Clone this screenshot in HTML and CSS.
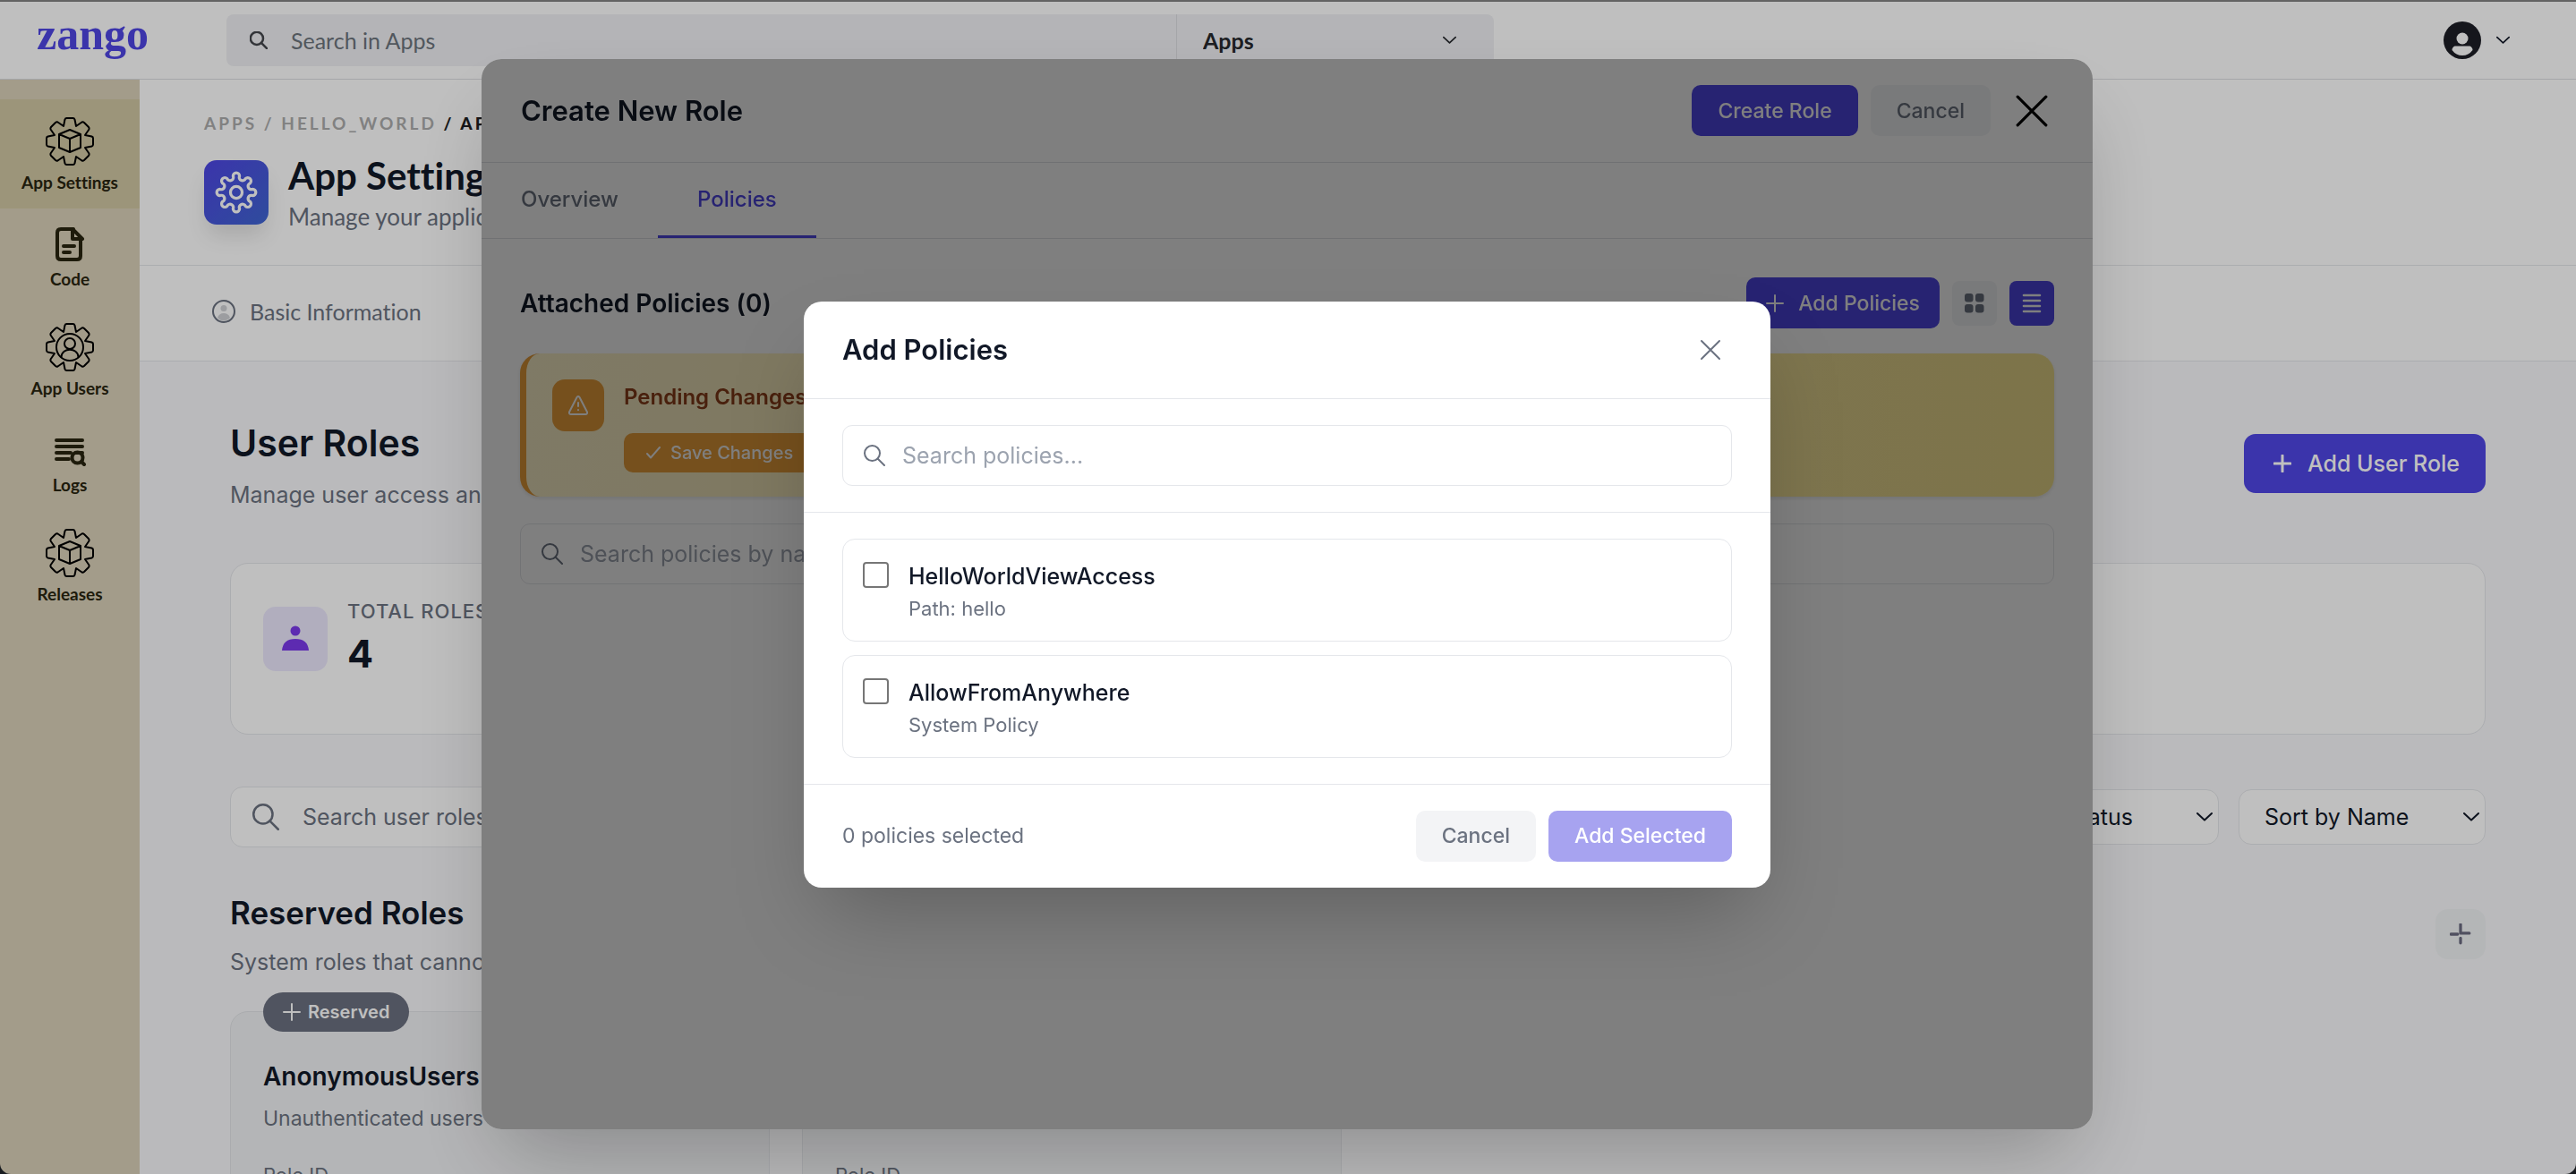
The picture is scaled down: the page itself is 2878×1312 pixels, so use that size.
FILE: index.html
```html
<!DOCTYPE html>
<html lang="en">

<head>
    <meta charset="UTF-8">
    <meta name="viewport" content="width=device-width, initial-scale=1.0">
    <title>Zango - App Settings</title>
    <link rel="stylesheet" href="styles.css">
</head>

<body>
    <!-- shared icon shapes -->
    <svg class="sprite" aria-hidden="true">
        <symbol id="gear" viewBox="-27 -27 54 54">
            <path d="M-7-17L-5.5-24.5Q-5-26-3.500-26H3.500Q5-26 5.500-24.500L7-17L13.500-21.500Q14.800-22 16-21L21-16Q22-14.800 21.500-13.500L17-7L24.500-5.500Q26-5 26-3.500V3.500Q26 5 24.500 5.500L17 7L21.500 13.500Q22 14.800 21 16L16 21Q14.800 22 13.500 21.500L7 17L5.500 24.500Q5 26 3.500 26H-3.500Q-5 26-5.500 24.500L-7 17L-13.500 21.500Q-14.800 22-16 21L-21 16Q-22 14.800-21.500 13.500L-17 7L-24.500 5.500Q-26 5-26 3.500V-3.500Q-26-5-24.500-5.500L-17-7L-21.500-13.500Q-22-14.800-21-16L-16-21Q-14.800-22-13.500-21.500Z" />
        </symbol>
        <symbol id="cube" viewBox="-27 -27 54 54">
            <path d="M0-13L12-8V7L0 12L-12 7V-8ZM-12-8L0-3L12-8M0-3V12" />
        </symbol>
        <symbol id="search" viewBox="0 0 24 24">
            <circle cx="9.500" cy="9.500" r="8.500" />
            <path d="M15.500 15.500L23 23" />
        </symbol>
        <symbol id="chevron" viewBox="0 0 18 10">
            <path d="M1 1L9 8.500L17 1" />
        </symbol>
        <symbol id="plus" viewBox="0 0 20 20">
            <path d="M10 1V19M1 10H19" />
        </symbol>
        <symbol id="cross" viewBox="0 0 24 24">
            <path d="M2 2L22 22M22 2L2 22" />
        </symbol>
    </svg>

    <header class="topbar">
        <a class="logo" href="#">zango</a>
        <div class="app-search">
            <label class="app-search-text">
                <svg class="icon icon-app-search"><use href="#search" /></svg>
                <input type="text" placeholder="Search in Apps" aria-label="Search in Apps">
            </label>
            <div class="select-wrap app-search-type">
                <select aria-label="Search type">
                    <option>Apps</option>
                </select>
                <svg class="icon chevron chevron-small"><use href="#chevron" /></svg>
            </div>
        </div>
        <button class="profile" type="button" aria-label="Profile">
            <svg class="avatar" viewBox="0 0 42 42">
                <circle cx="21" cy="21" r="21" fill="#1d1e26" />
                <circle cx="21" cy="19" r="6.500" fill="#fff" />
                <path d="M12.500 27.500H29.500Q32.500 29 32.500 32Q28 38 21 38T9.500 32Q9.500 29 12.500 27.500Z" fill="#fff" />
            </svg>
            <svg class="icon chevron-small"><use href="#chevron" /></svg>
        </button>
    </header>

    <div class="layout">
        <nav class="sidebar">
            <a class="nav-item active" href="#">
                <svg class="nav-gear"><use href="#gear" /><use href="#cube" /></svg>
                App Settings
            </a>
            <a class="nav-item" href="#">
                <svg class="nav-small" viewBox="0 0 40 40">
                    <path d="M24 3H10Q6 3 6 7V33Q6 37 10 37H28Q32 37 32 33V14" />
                    <path d="M23 3V14H34M23 3L34 14" />
                    <path d="M13 22H25M13 29H20" />
                </svg>
                Code
            </a>
            <a class="nav-item" href="#">
                <svg class="nav-gear" viewBox="-27 -27 54 54">
                    <use href="#gear" x="-27" y="-27" width="54" height="54" />
                    <circle r="15" />
                    <circle cy="-4" r="6" />
                    <path d="M-9.500 11C-9 0 9 0 9.500 11" />
                </svg>
                App Users
            </a>
            <a class="nav-item" href="#">
                <svg class="nav-small" viewBox="0 0 40 40">
                    <path d="M5 9H34M5 16H34M5 23H21M5 30H19" />
                    <circle cx="28.500" cy="28.500" r="6" />
                    <path d="M33 33L36 36M27 23H34" />
                </svg>
                Logs
            </a>
            <a class="nav-item" href="#">
                <svg class="nav-gear"><use href="#gear" /><use href="#cube" /></svg>
                Releases
            </a>
        </nav>

        <main class="page">
            <section class="page-head">
                <div class="breadcrumb">
                    <a href="#">APPS</a> <span>/</span> <a href="#">HELLO_WORLD</a> <b>/ APP SETTINGS</b>
                </div>
                <div class="page-title">
                    <div class="app-icon">
                        <svg viewBox="-22 -22 44 44">
                            <path d="M-3.300-16.700A3.300 3.300 0 0 1 3.300-16.700A3.300 3.300 0 0 0 9.400-14.100A3.300 3.300 0 0 1 14.100-9.400A3.300 3.300 0 0 0 16.700-3.300A3.300 3.300 0 0 1 16.700 3.300A3.300 3.300 0 0 0 14.100 9.400A3.300 3.300 0 0 1 9.400 14.100A3.300 3.300 0 0 0 3.300 16.700A3.300 3.300 0 0 1-3.300 16.700A3.300 3.300 0 0 0-9.400 14.100A3.300 3.300 0 0 1-14.100 9.400A3.300 3.300 0 0 0-16.700 3.300A3.300 3.300 0 0 1-16.700-3.300A3.300 3.300 0 0 0-14.100-9.400A3.300 3.300 0 0 1-9.400-14.100A3.300 3.300 0 0 0-3.300-16.700Z" />
                            <circle r="6" />
                        </svg>
                    </div>
                    <div>
                        <h1>App Settings</h1>
                        <p>Manage your application settings</p>
                    </div>
                </div>
            </section>

            <div class="page-tabs">
                <a href="#">
                    <svg class="tab-icon" viewBox="0 0 26 26">
                        <circle cx="13" cy="13" r="12" fill="none" stroke="#6b7280" stroke-width="2" />
                        <circle cx="13" cy="9.500" r="3.500" fill="#d0d2d6" />
                        <path d="M6 20Q8 15 13 15T20 20Q17 23.500 13 23.500T6 20Z" fill="#d0d2d6" />
                    </svg>
                    Basic Information
                </a>
            </div>

            <div class="content">
                <div class="row-between">
                    <div class="heading">
                        <h2>User Roles</h2>
                        <p>Manage user access and permissions</p>
                    </div>
                    <button class="btn-add-role" type="button">
                        <svg class="icon icon-plus"><use href="#plus" /></svg>
                        Add User Role
                    </button>
                </div>

                <div class="stat-card">
                    <div class="stat-icon">
                        <svg viewBox="0 0 30 30">
                            <circle cx="15" cy="6" r="5.500" fill="#7c3aed" />
                            <path d="M0 28Q1 15 15 15T30 28Z" fill="#7c3aed" />
                        </svg>
                    </div>
                    <div>
                        <div class="stat-label">TOTAL ROLES</div>
                        <div class="stat-value">4</div>
                    </div>
                </div>

                <div class="filters">
                    <label class="role-search">
                        <svg class="icon icon-role-search"><use href="#search" /></svg>
                        <input type="text" placeholder="Search user roles..." aria-label="Search user roles">
                    </label>
                    <div class="select-wrap select-status">
                        <select aria-label="Status">
                            <option>All Status</option>
                        </select>
                        <svg class="icon chevron"><use href="#chevron" /></svg>
                    </div>
                    <div class="select-wrap select-sort">
                        <select aria-label="Sort">
                            <option>Sort by Name</option>
                        </select>
                        <svg class="icon chevron"><use href="#chevron" /></svg>
                    </div>
                </div>

                <div class="row-between">
                    <div class="heading heading-small">
                        <h3>Reserved Roles</h3>
                        <p>System roles that cannot be modified</p>
                    </div>
                    <button class="btn-collapse" type="button" aria-label="Collapse">
                        <svg class="icon icon-collapse" viewBox="0 0 22 22"><path d="M11 1V10H20M1 11H8M11 15V20" /></svg>
                    </button>
                </div>

                <div class="role-grid">
                    <article class="role-card">
                        <span class="badge">
                            <svg class="icon icon-plus"><use href="#plus" /></svg>
                            Reserved
                        </span>
                        <h4>AnonymousUsers</h4>
                        <p>Unauthenticated users</p>
                        <span class="role-id">Role ID</span>
                    </article>
                    <article class="role-card">
                        <h4>SystemUsers</h4>
                        <p>Internal users</p>
                        <span class="role-id">Role ID</span>
                    </article>
                </div>
            </div>
        </main>
    </div>

    <!-- create role modal -->
    <div class="overlay">
        <div class="role-modal" role="dialog" aria-label="Create New Role">
            <div class="role-modal-head">
                <h2>Create New Role</h2>
                <div class="actions">
                    <button class="btn btn-primary" type="button">Create Role</button>
                    <button class="btn btn-light" type="button">Cancel</button>
                    <button class="btn-close btn-close-large" type="button" aria-label="Close">
                        <svg class="icon"><use href="#cross" /></svg>
                    </button>
                </div>
            </div>
            <div class="role-tabs">
                <button type="button">Overview</button>
                <button class="selected" type="button">Policies</button>
            </div>
            <div class="role-modal-body">
                <div class="row-between">
                    <h3>Attached Policies (0)</h3>
                    <div class="actions">
                        <button class="btn btn-primary btn-with-icon" type="button">
                            <svg class="icon icon-plus"><use href="#plus" /></svg>
                            Add Policies
                        </button>
                        <button class="btn-view" type="button" aria-label="Grid view">
                            <svg viewBox="0 0 22 22" fill="#6b7280">
                                <rect x="0" y="0" width="9.500" height="9.500" rx="3" />
                                <rect x="12" y="0" width="9.500" height="9.500" rx="3" />
                                <rect x="0" y="12" width="9.500" height="9.500" rx="3" />
                                <rect x="12" y="12" width="9.500" height="9.500" rx="3" />
                            </svg>
                        </button>
                        <button class="btn-view btn-view-on" type="button" aria-label="List view">
                            <svg viewBox="0 0 22 22" fill="none" stroke="#fff" stroke-width="2.600" stroke-linecap="round">
                                <path d="M2 2H20M2 8H20M2 14H20M2 20H20" />
                            </svg>
                        </button>
                    </div>
                </div>

                <div class="pending">
                    <div class="pending-icon">
                        <svg viewBox="0 0 24 24" fill="none" stroke="#fff" stroke-width="2" stroke-linecap="round" stroke-linejoin="round">
                            <path d="M10.500 3L2 19.500Q1.500 22 4 22H20Q22.500 22 22 19.500L13.500 3Q12 1 10.500 3ZM12 9V13M12 17V17.200" />
                        </svg>
                    </div>
                    <div>
                        <h4>Pending Changes</h4>
                        <button class="btn-save" type="button">
                            <svg class="icon" viewBox="0 0 16 14"><path d="M1 8L5 12.500L15 1" /></svg>
                            Save Changes
                        </button>
                    </div>
                </div>

                <label class="search-field">
                    <svg class="icon"><use href="#search" /></svg>
                    <input type="text" placeholder="Search policies by name..." aria-label="Search policies by name">
                </label>
            </div>

            <!-- add policies modal, dims only the role modal -->
            <div class="inner-overlay">
                <form class="policy-modal" role="dialog" aria-label="Add Policies">
                    <div class="policy-head">
                        <h2>Add Policies</h2>
                        <button class="btn-close" type="button" aria-label="Close">
                            <svg class="icon"><use href="#cross" /></svg>
                        </button>
                    </div>
                    <div class="policy-search">
                        <label class="search-field">
                            <svg class="icon"><use href="#search" /></svg>
                            <input type="text" placeholder="Search policies..." aria-label="Search policies">
                        </label>
                    </div>
                    <div class="policy-list">
                        <label class="policy">
                            <input type="checkbox">
                            <span class="policy-text">
                                <span class="policy-name">HelloWorldViewAccess</span>
                                <span class="policy-path">Path: hello</span>
                            </span>
                        </label>
                        <label class="policy">
                            <input type="checkbox">
                            <span class="policy-text">
                                <span class="policy-name">AllowFromAnywhere</span>
                                <span class="policy-path">System Policy</span>
                            </span>
                        </label>
                    </div>
                    <div class="policy-foot">
                        <span>0 policies selected</span>
                        <div class="actions">
                            <button class="btn btn-light" type="button">Cancel</button>
                            <button class="btn btn-primary" type="submit" disabled>Add Selected</button>
                        </div>
                    </div>
                </form>
            </div>
        </div>
    </div>
</body>

</html>
```
FILE: styles.css
```css
* {
    box-sizing: border-box;
}

html {
    background-color: #20242a;
}

body {
    font-family: Inter, "Liberation Sans", sans-serif;
    font-size: 25px;
    font-variant-ligatures: none;
    color: #111827;
    margin: 0;
    height: 100vh;
    overflow: hidden;
    display: flex;
    flex-direction: column;
}

h1, h2, h3, h4, p {
    margin: 0;
}

a {
    color: inherit;
    text-decoration: none;
}

button, input, select {
    font: inherit;
    color: inherit;
    border: none;
    background: none;
    padding: 0;
    margin: 0;
}

button {
    cursor: pointer;
}

.sprite {
    display: none;
}

.icon {
    fill: none;
    stroke: currentColor;
    stroke-width: 2px;
    stroke-linecap: round;
    stroke-linejoin: round;
    width: 24px;
    height: 24px;
    flex: none;
}

.icon-plus {
    width: 20px;
    height: 20px;
}

.chevron {
    position: absolute;
    right: 7px;
    top: 50%;
    transform: translateY(-50%);
    pointer-events: none;
    width: 18px;
    height: 10px;
}

.chevron-small {
    width: 15px;
    height: 10px;
}

.select-wrap {
    position: relative;
}

.select-wrap select {
    appearance: none;
    width: 100%;
    height: 100%;
}

.row-between {
    display: flex;
    align-items: center;
    justify-content: space-between;
}

.actions {
    display: flex;
    align-items: center;
    gap: 14px;
}

/* top bar */
.topbar {
    font-family: Lato, sans-serif;
    display: flex;
    align-items: center;
    background-color: #fff;
    border-top: 2px solid #848484;
    border-bottom: 1px solid #dddee2;
    height: 89px;
    flex: none;
    padding-right: 74px;
}

.logo {
    font-family: "Liberation Serif", serif;
    font-size: 50px;
    line-height: 60px;
    font-weight: bold;
    color: #4f46e5;
    width: 253px;
    padding-left: 41px;
    padding-bottom: 14px;
}

.app-search {
    display: flex;
    background-color: #f0f1f4;
    border-radius: 8px;
    height: 58px;
    width: 50.5%;
}

.app-search-text {
    display: flex;
    align-items: center;
    gap: 26px;
    flex: none;
    width: 75%;
    padding-left: 26px;
    border-right: 1px solid #dddee2;
    color: #45474d;
}

.app-search-text input {
    flex: 1;
}

.app-search input::placeholder {
    color: #6c747d;
}

.icon-app-search {
    width: 20px;
    height: 20px;
    stroke-width: 3px;
}

.app-search-type {
    flex: 1;
    font-weight: bold;
    color: #26282d;
}

.app-search-type select {
    padding-left: 29px;
}

.app-search-type .chevron {
    right: 42px;
}

.profile {
    display: flex;
    align-items: center;
    gap: 17px;
    margin-left: auto;
}

.avatar {
    width: 42px;
    height: 42px;
}

/* sidebar */
.layout {
    display: flex;
    flex: 1;
    min-height: 0;
    overflow: hidden;
    border-radius: 0 0 12px 12px;
}

.sidebar {
    width: 156px;
    flex: none;
    background-color: #dad0b8;
    padding-top: 22px;
}

.nav-item {
    display: flex;
    flex-direction: column;
    align-items: center;
    gap: 8px;
    font-family: Lato, sans-serif;
    font-size: 19px;
    line-height: 22px;
    font-weight: bold;
    color: #28240f;
    padding: 20px 0 18px;
}

.nav-item.active {
    background-color: #d0c7a3;
}

.nav-item svg {
    fill: none;
    stroke-linecap: round;
    stroke-linejoin: round;
}

.nav-gear {
    width: 54px;
    height: 54px;
    stroke: #000;
    stroke-width: 2px;
}

.nav-small {
    width: 40px;
    height: 40px;
    stroke: #28240f;
    stroke-width: 4px;
}

/* page */
.page {
    flex: 1;
    min-width: 0;
    overflow: hidden;
    background-color: #f9f9fb;
}

.page-head {
    font-family: Lato, sans-serif;
    background-color: #fff;
    border-bottom: 1px solid #e5e7eb;
    padding: 37px 72px 38px;
}

.breadcrumb {
    font-size: 19px;
    line-height: 24px;
    font-weight: bold;
    letter-spacing: 3px;
    color: #acacac;
    margin-bottom: 21px;
}

.breadcrumb b {
    color: #1d1e22;
}

.page-title {
    display: flex;
    align-items: center;
    gap: 22px;
}

.page-title h1 {
    font-size: 42px;
    line-height: 50px;
}

.page-title p {
    font-size: 26px;
    line-height: 32px;
    margin-top: 5px;
    color: #6b7280;
}

.app-icon {
    display: flex;
    align-items: center;
    justify-content: center;
    width: 72px;
    height: 72px;
    border-radius: 14px;
    background: linear-gradient(135deg, #4f46e5, #3f66d2);
    box-shadow: 0 16px 24px -4px rgba(0, 0, 0, 0.12);
}

.app-icon svg {
    width: 48px;
    height: 48px;
    fill: none;
    stroke: #fff;
    stroke-width: 3px;
    stroke-linejoin: round;
}

.page-tabs {
    font-family: Lato, sans-serif;
    display: flex;
    align-items: center;
    background-color: #fff;
    border-bottom: 1px solid #e5e7eb;
    height: 107px;
    padding: 0 81px 4px;
    color: #6b7280;
}

.page-tabs a {
    display: flex;
    align-items: center;
    gap: 16px;
}

.tab-icon {
    width: 26px;
    height: 26px;
}

.content {
    padding: 63px 101px 0;
}

.heading h2 {
    font-size: 41px;
    line-height: 56px;
    font-weight: 600;
}

.heading h3 {
    font-size: 35px;
    line-height: 46px;
    font-weight: 600;
}

.heading p {
    line-height: 32px;
    margin-top: 14px;
    color: #6b7280;
}

.heading-small p {
    margin-top: 16px;
}

.btn-add-role {
    display: flex;
    align-items: center;
    gap: 18px;
    height: 66px;
    padding: 0 29px 0 33px;
    border-radius: 13px;
    background-color: #4f46e5;
    color: #fff;
    font-weight: 500;
}

.btn-add-role .icon {
    stroke-width: 3px;
}

.stat-card {
    display: flex;
    align-items: center;
    gap: 22px;
    margin-top: 60px;
    padding: 37px 36px 59px;
    background-color: #fff;
    border: 1px solid #e5e7eb;
    border-radius: 20px;
}

.stat-icon {
    display: flex;
    align-items: center;
    justify-content: center;
    width: 72px;
    height: 72px;
    border-radius: 14px;
    background-color: #ede9fe;
}

.stat-icon svg {
    width: 30px;
    height: 30px;
}

.stat-label {
    font-size: 22px;
    line-height: 32px;
    font-weight: 500;
    letter-spacing: 1px;
    color: #6b7280;
}

.stat-value {
    font-size: 43px;
    line-height: 62px;
    font-weight: bold;
}

.filters {
    display: flex;
    align-items: center;
    gap: 22px;
    margin: 58px 0 50px;
}

.role-search {
    display: flex;
    align-items: center;
    gap: 26px;
    flex: 1;
    height: 68px;
    padding: 0 24px;
    background-color: #fff;
    border: 1px solid #e5e7eb;
    border-radius: 14px;
    color: #6b7280;
}

.role-search input {
    flex: 1;
}

.role-search input::placeholder {
    color: #6b7280;
}

.icon-role-search {
    width: 30px;
    height: 30px;
}

.filters .select-wrap {
    height: 62px;
}

.filters select {
    padding: 0 28px;
    background-color: #fff;
    border: 1px solid #e5e7eb;
    border-radius: 14px;
}

.select-status {
    width: 236px;
}

.select-sort {
    width: 276px;
}

.btn-collapse {
    display: flex;
    align-items: center;
    justify-content: center;
    width: 56px;
    height: 56px;
    border-radius: 14px;
    background-color: #f1f3f5;
    color: #6b6b80;
}

.icon-collapse {
    width: 24px;
    height: 24px;
    stroke-width: 3px;
}

.role-grid {
    display: grid;
    grid-template-columns: repeat(4, 1fr);
    gap: 36px;
    margin-top: 39px;
}

.role-card {
    position: relative;
    height: 400px;
    padding: 52px 36px;
    background-color: #f1f2f4;
    border: 1px solid #e3e5e9;
    border-radius: 20px;
    color: #6b7280;
}

.role-card h4 {
    font-size: 28px;
    line-height: 40px;
    font-weight: 600;
    color: #111827;
}

.role-card p {
    font-size: 23px;
    line-height: 30px;
    margin: 12px 0 32px;
}

.role-id {
    font-size: 22px;
    line-height: 32px;
}

.badge {
    position: absolute;
    top: -22px;
    left: 36px;
    display: flex;
    align-items: center;
    gap: 8px;
    height: 44px;
    padding: 0 22px;
    border-radius: 22px;
    background-color: #6b7080;
    color: #fff;
    font-size: 20px;
    font-weight: 600;
}

/* modals */
.overlay {
    position: fixed;
    inset: 0;
    display: flex;
    justify-content: center;
    align-items: flex-start;
    padding: 66px 2px 0 0;
    background-color: rgba(0, 0, 0, 0.25);
}

.role-modal {
    position: relative;
    display: flex;
    flex-direction: column;
    width: 100%;
    max-width: 1800px;
    min-height: calc(100vh - 116px);
    background-color: #fff;
    border-radius: 22px;
    overflow: hidden;
    box-shadow: 0 45px 90px -22px rgba(0, 0, 0, 0.25);
}

.role-modal h2, .policy-modal h2 {
    font-size: 31px;
    line-height: 48px;
    font-weight: 600;
}

.role-modal-head {
    display: flex;
    align-items: center;
    justify-content: space-between;
    padding: 29px 44px;
    border-bottom: 1px solid #e0e2e6;
}

.btn {
    height: 57px;
    padding: 0 29px;
    border-radius: 10px;
    font-size: 23px;
    font-weight: 500;
}

.btn-primary {
    background-color: #4f46e5;
    color: #fff;
}

.btn-primary:disabled {
    background-color: #a7a3f0;
}

.btn-light {
    background-color: #f3f4f6;
    color: #6b7280;
}

.btn-with-icon {
    display: flex;
    align-items: center;
    gap: 16px;
    padding: 0 22px;
}

.btn-close {
    display: flex;
    align-items: center;
    justify-content: center;
    width: 48px;
    height: 48px;
    color: #6b7280;
}

.btn-close-large {
    margin-left: 8px;
    color: #000;
}

.btn-close-large .icon {
    width: 38px;
    height: 38px;
}

.role-tabs {
    display: flex;
    height: 85px;
    border-bottom: 1px solid #e0e2e6;
}

.role-tabs button {
    padding: 0 44px;
    color: #6b7280;
    font-size: 24px;
    font-weight: 500;
    border-bottom: 3px solid transparent;
}

.role-tabs .selected {
    color: #4f46e5;
    border-color: #4f46e5;
}

.role-modal-body {
    padding: 43px;
}

.role-modal-body h3 {
    font-size: 28px;
    font-weight: 600;
}

.btn-view {
    display: flex;
    align-items: center;
    justify-content: center;
    width: 50px;
    height: 50px;
    border-radius: 8px;
    background-color: #f3f4f6;
}

.btn-view svg {
    width: 22px;
    height: 22px;
}

.btn-view-on {
    background-color: #4f46e5;
}

.pending {
    display: flex;
    align-items: flex-start;
    gap: 22px;
    margin: 28px 0 30px;
    padding: 29px;
    height: 160px;
    border-left: 7px solid #eca03a;
    border-radius: 22px;
    background: linear-gradient(90deg, #fff4cc, #fbe893);
    box-shadow: 0 2px 4px rgba(0, 0, 0, 0.1);
}

.pending-icon {
    display: flex;
    align-items: center;
    justify-content: center;
    width: 58px;
    height: 58px;
    border-radius: 14px;
    background-color: #eca03a;
}

.pending-icon svg {
    width: 24px;
    height: 24px;
}

.pending h4 {
    font-size: 24px;
    line-height: 40px;
    font-weight: 600;
    color: #92401a;
    margin-bottom: 20px;
}

.btn-save {
    display: flex;
    align-items: center;
    gap: 11px;
    height: 44px;
    padding: 0 25px;
    border-radius: 10px;
    background-color: #eca03a;
    color: #fff;
    font-size: 20px;
    font-weight: 500;
}

.btn-save .icon {
    width: 16px;
    height: 14px;
}

.search-field {
    display: flex;
    align-items: center;
    gap: 19px;
    height: 68px;
    padding: 0 23px;
    border: 1px solid #e5e7eb;
    border-radius: 11px;
    color: #6b7280;
}

.search-field input {
    flex: 1;
}

.search-field input::placeholder {
    color: #9ca3af;
}

.inner-overlay {
    position: absolute;
    inset: 0;
    display: flex;
    align-items: center;
    justify-content: center;
    background-color: rgba(0, 0, 0, 0.5);
}

.policy-modal {
    width: 60%;
    background-color: #fff;
    border-radius: 20px;
    box-shadow: 0 45px 90px -22px rgba(0, 0, 0, 0.25);
}

.policy-head {
    display: flex;
    align-items: center;
    justify-content: space-between;
    padding: 30px 43px;
    border-bottom: 1px solid #e5e7eb;
}

.policy-search {
    padding: 29px 43px;
    border-bottom: 1px solid #e5e7eb;
}

.policy-list {
    display: flex;
    flex-direction: column;
    gap: 15px;
    padding: 29px 43px;
    border-bottom: 1px solid #e5e7eb;
}

.policy {
    display: flex;
    align-items: flex-start;
    gap: 22px;
    height: 115px;
    padding: 25px 22px;
    border: 1px solid #e5e7eb;
    border-radius: 14px;
}

.policy input {
    appearance: none;
    width: 29px;
    height: 29px;
    border: 2px solid #767676;
    border-radius: 4px;
    background-color: #fff;
}

.policy-text {
    display: flex;
    flex-direction: column;
}

.policy-name {
    line-height: 32px;
    font-weight: 500;
}

.policy-path {
    font-size: 22px;
    line-height: 32px;
    margin-top: 4px;
    color: #6b7280;
}

.policy-foot {
    display: flex;
    align-items: center;
    justify-content: space-between;
    padding: 29px 43px;
    font-size: 23px;
    color: #6b7280;
}
```
